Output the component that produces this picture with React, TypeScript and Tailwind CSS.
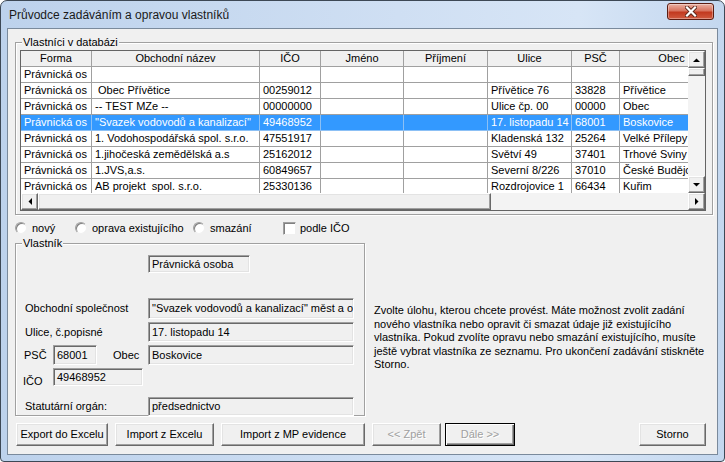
import React from 'react';

const raised =
  'bg-[#f0f0f0] border border-t-white border-l-white border-r-[#696969] border-b-[#696969] shadow-[inset_-1px_-1px_0_#a0a0a0,inset_1px_1px_0_#e3e3e3]';
const sunken =
  'bg-[#f0f0f0] border border-t-[#a0a0a0] border-l-[#a0a0a0] border-r-white border-b-white shadow-[inset_1px_1px_0_#696969,inset_-1px_-1px_0_#e3e3e3]';

const cols = [
  { t: 'Forma', w: 'w-[71px]' },
  { t: 'Obchodní název', w: 'w-[168px]' },
  { t: 'IČO', w: 'w-[61px]' },
  { t: 'Jméno', w: 'w-[83px]' },
  { t: 'Příjmení', w: 'w-[84px]' },
  { t: 'Ulice', w: 'w-[84px]' },
  { t: 'PSČ', w: 'w-[48px]' },
  { t: 'Obec', w: 'w-[104px]' },
];

const rows = [
  ['Právnická os', '', '', '', '', '', '', ''],
  ['Právnická os', ' Obec Přívětice', '00259012', '', '', 'Přívětice 76', '33828', 'Přívětice'],
  ['Právnická os', '-- TEST MZe --', '00000000', '', '', 'Ulice čp. 00', '00000', 'Obec'],
  ['Právnická os', '"Svazek vodovodů a kanalizací"', '49468952', '', '', '17. listopadu 14', '68001', 'Boskovice'],
  ['Právnická os', '1. Vodohospodářská spol. s.r.o.', '47551917', '', '', 'Kladenská 132', '25264', 'Velké Přílepy'],
  ['Právnická os', '1.jihočeská zemědělská a.s', '25162012', '', '', 'Světví 49', '37401', 'Trhové Sviny'],
  ['Právnická os', '1.JVS,a.s.', '60849657', '', '', 'Severní 8/226', '37010', 'České Budějovice'],
  ['Právnická os', 'AB projekt  spol. s.r.o.', '25330136', '', '', 'Rozdrojovice 1', '66434', 'Kuřim'],
];

const Arrow = ({ dir }: { dir: 'up' | 'down' | 'left' | 'right' }) => {
  const pts = {
    up: '0,4 7,4 3.5,0.5',
    down: '0,0 7,0 3.5,3.5',
    left: '4,0 4,7 0.5,3.5',
    right: '0,0 0,7 3.5,3.5',
  }[dir];
  const vertical = dir === 'up' || dir === 'down';
  return (
    <svg width={vertical ? 7 : 4} height={vertical ? 4 : 7}>
      <polygon points={pts} fill="#000" />
    </svg>
  );
};

const ScrollBtn = ({ dir }: { dir: 'up' | 'down' | 'left' | 'right' }) => (
  <div className={`${raised} w-[17px] h-[17px] shrink-0 flex items-center justify-center`}>
    <Arrow dir={dir} />
  </div>
);

const Grid = () => (
  <div className="w-[686px] h-[161px] border border-[#646464] bg-white flex flex-col overflow-hidden">
    <div className="flex h-[142px]">
      <div className="w-[667px] overflow-hidden">
        <div className="flex h-[16px] w-max">
          {cols.map((c) => (
            <div
              key={c.t}
              className={`${c.w} shrink-0 bg-[#f0f0f0] border-r border-b border-[#a0a0a0] text-center leading-[15px]`}
            >
              {c.t}
            </div>
          ))}
        </div>
        {rows.map((r, i) => {
          const sel = i === 3;
          return (
            <div key={i} className={`flex h-[16px] w-max ${sel ? 'bg-[#3399ff] text-white' : ''}`}>
              {r.map((v, j) => (
                <div
                  key={j}
                  className={`${cols[j].w} shrink-0 border-b border-r ${
                    sel ? 'border-[#8cc0f5]' : 'border-[#a0a0a0]'
                  } pl-[3px] leading-[15px] whitespace-pre overflow-hidden`}
                >
                  {v}
                </div>
              ))}
            </div>
          );
        })}
      </div>
      <div className="w-[17px] flex flex-col bg-[#f3f3f3]">
        <ScrollBtn dir="up" />
        <div className={`${raised} h-[8px] shrink-0`} />
        <div className="flex-1" />
        <ScrollBtn dir="down" />
      </div>
    </div>
    <div className="flex h-[17px] bg-[#f3f3f3]">
      <ScrollBtn dir="left" />
      <div className={`${raised} w-[453px] h-[17px] shrink-0`} />
      <div className="flex-1" />
      <ScrollBtn dir="right" />
    </div>
  </div>
);

const Radio = ({ label, w }: { label: string; w: string }) => (
  <div className={`${w} shrink-0 flex items-center`}>
    <span className="w-[12px] h-[12px] rounded-full bg-white border border-t-[#a0a0a0] border-l-[#a0a0a0] border-r-[#f0f0f0] border-b-[#f0f0f0] shadow-[inset_1px_1px_0_#808080]" />
    <span className="ml-[5px]">{label}</span>
  </div>
);

const Field = ({ text, w, h }: { text: string; w: string; h: string }) => (
  <div className={`${sunken} ${w} ${h} shrink-0 pl-[3px] flex items-center whitespace-nowrap overflow-hidden`}>
    {text}
  </div>
);

const Button = ({
  label,
  w,
  disabled,
  def,
}: {
  label: string;
  w: string;
  disabled?: boolean;
  def?: boolean;
}) => (
  <div
    className={`${w} h-[23px] shrink-0 flex items-center justify-center ${
      def
        ? 'bg-[#f0f0f0] border border-black shadow-[inset_1px_1px_0_#fff,inset_-1px_-1px_0_#696969,inset_-2px_-2px_0_#a0a0a0]'
        : raised
    } ${disabled ? 'text-[#a0a0a0] [text-shadow:1px_1px_0_#fff]' : ''}`}
  >
    {label}
  </div>
);

const App: React.FC = () => {
  return (
    <div className="w-[725px] h-[462px] bg-white">
      <div className="w-[725px] h-[462px] rounded-t-[7px] rounded-b-[4px] border border-[#3d4855] bg-[linear-gradient(to_right,#bdd2ec,#cfdff3_55%,#d7e5f6_80%,#c3d7ef)] font-['Liberation_Sans',Arial,sans-serif] text-[11px] text-black flex flex-col">
        {/* Title bar */}
        <div className="h-[27px] flex justify-between shrink-0">
          <div className="self-center pl-[8px] text-[12px] text-[#1a1a1a]">Průvodce zadáváním a opravou vlastníků</div>
          <div className="mt-[2px] mr-[10px] w-[47px] h-[17px] rounded-[3px] border border-[#5b1d12] bg-[linear-gradient(to_bottom,#eab1a3,#d8735e_45%,#c2391f_55%,#d05a3f)] flex items-center justify-center shadow-[inset_0_0_0_1px_rgba(255,255,255,0.35)]">
            <svg width="12" height="11" viewBox="0 0 12 11">
              <path d="M2 1.5 L10 9.5 M10 1.5 L2 9.5" stroke="#5a2418" strokeWidth="4" strokeLinecap="square" />
              <path d="M2 1.5 L10 9.5 M10 1.5 L2 9.5" stroke="#fff" strokeWidth="2.2" strokeLinecap="square" />
            </svg>
          </div>
        </div>

        {/* Client area */}
        <div className="ml-[6px] w-[711px] h-[427px] border border-[#7a8a9c] bg-[#f0f0f0] flex flex-col shrink-0">
          {/* Owners in DB */}
          <div className="relative ml-[7px] mt-[13px] w-[698px] h-[173px] border border-[#a0a0a0] shadow-[1px_1px_0_#fff,inset_1px_1px_0_#fff] shrink-0">
            <span className="absolute left-[6px] top-[-8px] px-[1px] bg-[#f0f0f0] leading-[14px]">Vlastníci v databázi</span>
            <div className="ml-[4px] mt-[7px]">
              <Grid />
            </div>
          </div>

          {/* Mode */}
          <div className="flex items-center h-[16px] mt-[5px] pl-[7px]">
            <Radio label="nový" w="w-[60px]" />
            <Radio label="oprava existujícího" w="w-[118px]" />
            <Radio label="smazání" w="w-[90px]" />
            <div className="flex items-center">
              <span className="w-[13px] h-[13px] bg-white border border-t-[#a0a0a0] border-l-[#a0a0a0] border-r-[#f0f0f0] border-b-[#f0f0f0] shadow-[inset_1px_1px_0_#808080]" />
              <span className="ml-[4px]">podle IČO</span>
            </div>
          </div>

          {/* Owner detail + help */}
          <div className="flex mt-[7px] shrink-0">
            <div className="relative ml-[7px] w-[350px] h-[173px] border border-[#a0a0a0] shadow-[1px_1px_0_#fff,inset_1px_1px_0_#fff] shrink-0">
              <span className="absolute left-[6px] top-[-8px] px-[1px] bg-[#f0f0f0] leading-[14px]">Vlastník</span>
              <div className="flex flex-col">
                <div className="flex mt-[11px] pl-[132px]">
                  <Field text="Právnická osoba" w="w-[102px]" h="h-[18px]" />
                </div>
                <div className="flex items-center mt-[25px] pl-[9px]">
                  <span className="w-[123px] shrink-0">Obchodní společnost</span>
                  <Field text={'"Svazek vodovodů a kanalizací" měst a obcí'} w="w-[206px]" h="h-[21px]" />
                </div>
                <div className="flex items-center mt-[3px] pl-[9px]">
                  <span className="w-[123px] shrink-0">Ulice, č.popisné</span>
                  <Field text="17. listopadu 14" w="w-[206px]" h="h-[20px]" />
                </div>
                <div className="flex items-center mt-[3px] pl-[8px]">
                  <span className="w-[29px] shrink-0">PSČ</span>
                  <Field text="68001" w="w-[44px]" h="h-[20px]" />
                  <span className="ml-[16px] w-[35px] shrink-0">Obec</span>
                  <Field text="Boskovice" w="w-[206px]" h="h-[20px]" />
                </div>
                <div className="flex mt-[3px] pl-[7px]">
                  <span className="w-[30px] shrink-0 mt-[5px]">IČO</span>
                  <Field text="49468952" w="w-[90px]" h="h-[18px]" />
                </div>
                <div className="flex items-center mt-[7px] pl-[9px]">
                  <span className="w-[123px] shrink-0">Statutární orgán:</span>
                  <Field text="předsednictvo" w="w-[206px]" h="h-[19px]" />
                </div>
              </div>
            </div>
            <div className="ml-[9px] mt-[61px] leading-[13.5px] whitespace-nowrap">
              <div>Zvolte úlohu, kterou chcete provést. Máte možnost zvolit zadání</div>
              <div>nového vlastníka nebo opravit či smazat údaje již existujícího</div>
              <div>vlastníka. Pokud zvolíte opravu nebo smazání existujícího, musíte</div>
              <div>ještě vybrat vlastníka ze seznamu. Pro ukončení zadávání stiskněte</div>
              <div>Storno.</div>
            </div>
          </div>

          {/* Buttons */}
          <div className="flex mt-[7px] pl-[8px]">
            <Button label="Export do Excelu" w="w-[92px]" />
            <div className="w-[7px]" />
            <Button label="Import z Excelu" w="w-[99px]" />
            <div className="w-[7px]" />
            <Button label="Import z MP evidence" w="w-[144px]" />
            <div className="w-[7px]" />
            <Button label="<< Zpět" w="w-[69px]" disabled />
            <div className="w-[4px]" />
            <Button label="Dále >>" w="w-[70px]" disabled def />
            <div className="w-[124px]" />
            <Button label="Storno" w="w-[67px]" />
          </div>
        </div>
      </div>
    </div>
  );
};

export default App;
